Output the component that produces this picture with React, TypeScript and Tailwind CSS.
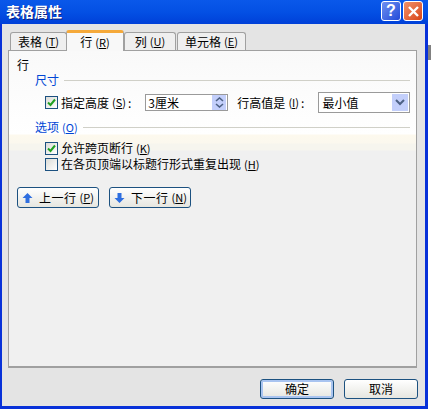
const font = "font-['Noto_Sans_CJK_SC','Liberation_Sans',sans-serif]";

const Key = ({ k }: { k: string }) => (
  <span className="text-[11px] ml-[3px]">
    (<span className="underline">{k}</span>)
  </span>
);

const Tab = ({ label, k, active, w }: { label: string; k: string; active?: boolean; w: string }) => {
  if (active) {
    return (
      <div className={`${w} h-[21px] -ml-[1px] z-10 bg-[#f8f8f8] border-x border-[#a0a0a0] border-t-[3px] border-t-[#f5a93a] rounded-t-[3px] -mb-[1px] flex items-center justify-center text-[12px] text-black`}>
        {label}
        <Key k={k} />
      </div>
    );
  }
  return (
    <div className={`${w} h-[18px] bg-[#efefef] border-x border-t border-[#a0a0a0] rounded-t-[3px] flex items-center justify-center text-[12px] text-black`}>
      {label}
      <Key k={k} />
    </div>
  );
};

const Check = ({ checked }: { checked?: boolean }) => (
  <div className="w-[13px] h-[13px] border border-[#1c5180] bg-gradient-to-br from-[#dcdcd7] to-white flex items-center justify-center shrink-0">
    {checked && (
      <svg width="9" height="9" viewBox="0 0 9 9">
        <path d="M1 4.5 L3.5 7 L8 1.5" fill="none" stroke="#21a121" strokeWidth="2" />
      </svg>
    )}
  </div>
);

const GroupTitle = ({ children }: { children: React.ReactNode }) => (
  <div className="flex items-center text-[12px] text-[#0046d5] h-[14px] pl-[26px]">
    {children}
    <div className="flex-1 h-[1px] bg-[#d0d0c8] ml-[5px]" />
  </div>
);

const NavBtn = ({ up, label, k }: { up?: boolean; label: string; k: string }) => (
  <div className="w-[82px] h-[21px] border border-[#1c5180] rounded-[3px] bg-gradient-to-b from-white to-[#e6e6e0] flex items-center pl-[4px] text-[12px] text-black">
    <svg width="11" height="12" viewBox="0 0 11 12" className="shrink-0">
      <path
        d={up ? "M5.5 1 L10.5 6 L7.5 6 L7.5 11 L3.5 11 L3.5 6 L0.5 6 Z" : "M3.5 1 L7.5 1 L7.5 6 L10.5 6 L5.5 11 L0.5 6 L3.5 6 Z"}
        fill="#2f6fe0"
      />
    </svg>
    <span className="ml-[6px] tracking-[0.5px]">{label}</span>
    <Key k={k} />
  </div>
);

const App = () => {
  return (
    <div className={`${font} w-[431px] h-[409px] flex bg-white overflow-hidden`}>
      <div className="w-[428px] h-full flex flex-col bg-[#0831d9]">
        {/* title bar */}
        <div className="h-[24px] shrink-0 flex items-start justify-between pl-[6px] pr-[5px] pt-[1px] bg-gradient-to-b from-[#0a58ea] via-[#0450e4] to-[#0040d8]">
          <span className="text-white font-bold text-[14px] leading-[20px] [text-shadow:1px_1px_#0a1f80]">表格属性</span>
          <div className="flex gap-[2px]">
            <div className="w-[20px] h-[20px] rounded-[3px] border border-white bg-gradient-to-br from-[#6f8ff0] to-[#2448d8] flex items-center justify-center text-white font-bold text-[16px] leading-none font-['Liberation_Sans',sans-serif]">
              ?
            </div>
            <div className="w-[20px] h-[20px] rounded-[3px] border border-white bg-gradient-to-br from-[#f09068] to-[#d8420f] flex items-center justify-center">
              <svg width="13" height="13" viewBox="0 0 13 13">
                <path d="M2 2 L11 11 M11 2 L2 11" stroke="white" strokeWidth="2.4" />
              </svg>
            </div>
          </div>
        </div>

        {/* dialog body */}
        <div className="flex-1 flex flex-col ml-[2px] mr-[3px] mb-[3px] bg-[#e4e4e4] min-h-0 pl-[6px] pr-[8px] pt-[7px]">
          <div className="flex items-end pl-[2px] h-[19px] shrink-0">
            <Tab label="表格" k="T" w="w-[57px]" />
            <Tab label="行" k="R" active w="w-[58px]" />
            <Tab label="列" k="U" w="w-[52px] mr-[1px]" />
            <Tab label="单元格" k="E" w="w-[69px]" />
          </div>

          {/* panel */}
          <div className="h-[318px] shrink-0 border border-[#a0a0a0] border-b-2 bg-[linear-gradient(#f9f9f9_0px,#ffffff_83px,#fdf9ee_84px,#fbf8ee_92px,#f6f5ee_93px,#f6f5ee_99px,#f0f0f0_100px)] pt-[6px] text-[12px] text-black">
            <div className="pl-[8px] h-[15px] flex items-center">行</div>
            <div className="pr-[6px] mt-[1px]">
              <GroupTitle>尺寸</GroupTitle>
            </div>
            <div className="flex items-center pl-[36px] mt-[5px] h-[21px]">
              <Check checked />
              <span className="ml-[3px]">指定高度</span>
              <Key k="S" />
              <span className="ml-[2px]">:</span>
              <div className="ml-[14px] w-[83px] h-[17px] border border-[#9a9a9a] bg-white flex items-center justify-between pl-[2px] pr-[1px]">
                <span>3厘米</span>
                <div className="w-[14px] h-[15px] bg-[#c3cffb] flex flex-col items-center justify-center gap-[1px]">
                  <svg width="9" height="5" viewBox="0 0 9 5"><path d="M1 4 L4.5 1 L8 4" fill="none" stroke="#4d6185" strokeWidth="1.6" /></svg>
                  <svg width="9" height="5" viewBox="0 0 9 5"><path d="M1 1 L4.5 4 L8 1" fill="none" stroke="#4d6185" strokeWidth="1.6" /></svg>
                </div>
              </div>
              <span className="ml-[9px]">行高值是</span>
              <Key k="I" />
              <span className="ml-[2px]">:</span>
              <div className="ml-[14px] w-[92px] h-[21px] border border-[#9a9a9a] bg-white flex items-center justify-between pl-[3px] pr-[1px]">
                <span>最小值</span>
                <div className="w-[16px] h-[17px] bg-[#c3cffb] flex items-center justify-center">
                  <svg width="10" height="7" viewBox="0 0 10 7"><path d="M1 1 L5 5 L9 1" fill="none" stroke="#4d6185" strokeWidth="2" /></svg>
                </div>
              </div>
            </div>
            <div className="pr-[6px] mt-[7px]">
              <GroupTitle>
                选项
                <Key k="O" />
              </GroupTitle>
            </div>
            <div className="flex items-center pl-[36px] mt-[7px] h-[14px]">
              <Check checked />
              <span className="ml-[3px]">允许跨页断行</span>
              <Key k="K" />
            </div>
            <div className="flex items-center pl-[36px] mt-[2px] h-[14px]">
              <Check />
              <span className="ml-[3px]">在各页顶端以标题行形式重复出现</span>
              <Key k="H" />
            </div>
            <div className="flex gap-[10px] pl-[8px] mt-[16px]">
              <NavBtn up label="上一行" k="P" />
              <NavBtn label="下一行" k="N" />
            </div>
          </div>

          {/* footer */}
          <div className="flex justify-end gap-[10px] pt-[11px] -mr-[1px] text-[12px] text-black">
            <div className="w-[74px] h-[20px] border border-[#1c5180] rounded-[3px] bg-gradient-to-b from-white to-[#e6e6e0] shadow-[inset_0_0_0_2px_#a9c4f0] flex items-center justify-center">确定</div>
            <div className="w-[74px] h-[20px] border border-[#1c5180] rounded-[3px] bg-gradient-to-b from-white to-[#e6e6e0] flex items-center justify-center">取消</div>
          </div>
        </div>
      </div>
      <div className="flex-1 flex flex-col">
        <div className="h-[45px]" />
        <div className="h-[15px] bg-[#808080]" />
      </div>
    </div>
  );
};

export default App;
